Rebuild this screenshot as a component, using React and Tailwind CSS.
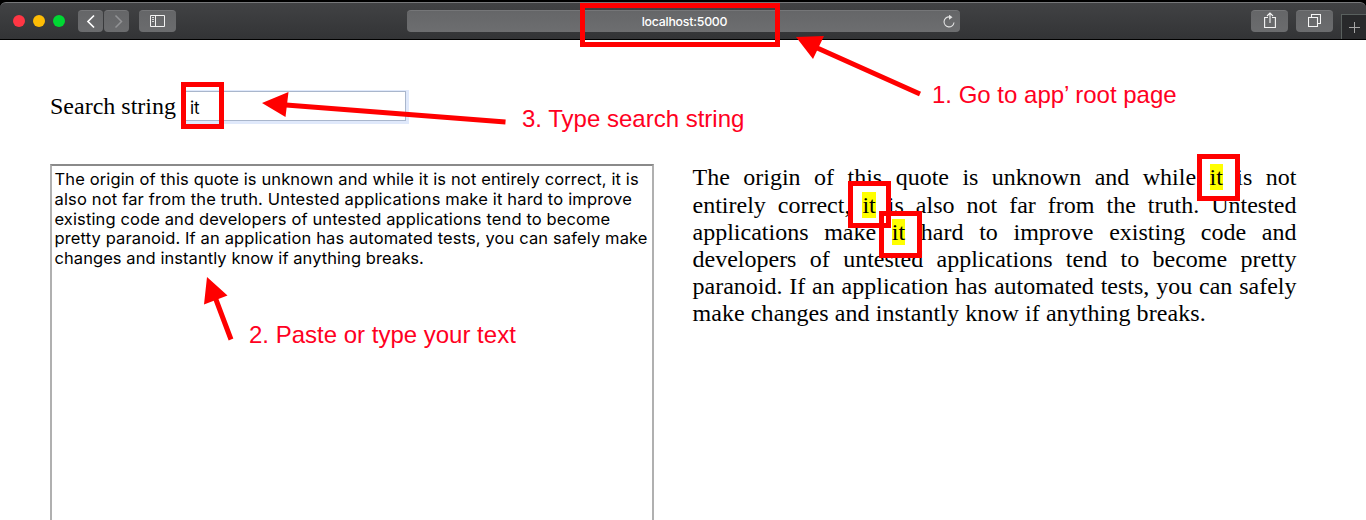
import React from "react";

const typedLines = [
  ["The origin of this quote is unknown and while it is not entirely correct, it is", "h-[20px] tracking-[0.130px]"],
  ["also not far from the truth. Untested applications make it hard to improve", "h-[20px] tracking-[0.165px]"],
  ["existing code and developers of untested applications tend to become", "h-[19px] tracking-[0.120px]"],
  ["pretty paranoid. If an application has automated tests, you can safely make", "h-[20px] tracking-[0.125px]"],
  ["changes and instantly know if anything breaks.", "h-[20px] tracking-[0.070px]"],
];

const Hit = () => <mark className="bg-[#ffff00] text-black">it</mark>;

const resultLines = [
  ["h-[28px]", <>The origin of this quote is unknown and while <Hit /> is not</>],
  ["h-[27px]", <>entirely correct, <Hit /> is also not far from the truth. Untested</>],
  ["h-[27px]", <>applications make <Hit /> hard to improve existing code and</>],
  ["h-[27px]", <>developers of untested applications tend to become pretty</>],
  ["h-[27px]", <>paranoid. If an application has automated tests, you can safely</>],
];

function ToolButton({ className, children }) {
  return (
    <button className={`flex h-[22px] items-center justify-center rounded border-t border-[#757678] bg-linear-to-b from-[#656668] to-[#6b6c6e] ${className}`}>
      {children}
    </button>
  );
}

function Toolbar() {
  return (
    <header className="flex h-10 flex-col bg-black pt-0.5 pb-px">
      <div className="flex grow rounded-t-md border-t border-[#77787a] bg-linear-to-b from-[#414244] to-[#333436] pt-[7px] pl-[13px]">
        <div className="mt-[5px] flex w-[65px] gap-2">
          <i className="size-3 rounded-full bg-[#ff3644]" />
          <i className="size-3 rounded-full bg-[#fdbc05]" />
          <i className="size-3 rounded-full bg-[#00d733]" />
        </div>
        <div className="flex gap-px">
          <ToolButton className="w-[25px]">
            <svg className="size-[22px]" viewBox="0 0 22 22" fill="none" stroke="#fff" strokeWidth="1.7"><path d="M14 4.500 8 10.500l6 6" /></svg>
          </ToolButton>
          <ToolButton className="w-[25px]">
            <svg className="size-[22px]" viewBox="0 0 22 22" fill="none" stroke="#929395" strokeWidth="1.5"><path d="m9.500 4.500 6 6-6 6" /></svg>
          </ToolButton>
        </div>
        <ToolButton className="ml-[10px] w-[37px]">
          <svg className="-mt-px h-3 w-[15px]" viewBox="0 0 15 12" fill="none" stroke="#f2f2f2"><path d="M.5.5h14v11H.5zM5.500.5v11" /><path d="M2 2.500h2M2 4.500h2M2 6.500h2" strokeWidth=".8" /></svg>
        </ToolButton>
        <div className="ml-[231px] flex h-[22px] w-[553px] items-center rounded border-t border-[#757678] bg-linear-to-b from-[#656668] to-[#6d6e70]">
          <div className="grow pt-[2px] pl-[2px] text-center font-['Inter','Liberation_Sans',sans-serif] text-[12.300px] font-medium text-white"><span className="inline-block pl-[18px] tracking-[-0.210px]">localhost:5000</span></div>
          <svg className="mr-[4px] size-[14px]" viewBox="0 0 14 14" fill="none" stroke="#e3e3e3" strokeWidth="1.100"><path d="M7.500 1.900A5 5 0 1 0 12 7.500" /><path d="m7-.3 3.500 2.500L7 4.700z" fill="#e3e3e3" stroke="none" /></svg>
        </div>
        <ToolButton className="ml-[291px] w-[37px]">
          <svg className="-mt-[3px] h-4 w-3" viewBox="0 0 12 16" fill="none" stroke="#f5f5f5" strokeWidth="1.100"><path d="M4 5.500H.6v10h10.800v-10H8M6 11V1M3 4l3-3 3 3" /></svg>
        </ToolButton>
        <ToolButton className="ml-2 w-[37px]">
          <svg className="-mt-[2px] h-[13px] w-[13px]" viewBox="0 0 13 13" fill="none" stroke="#f5f5f5" strokeWidth="1.100"><path d="M.5 3.500h9v9h-9zM3.500 3.500v-3h9v9h-3" /></svg>
        </ToolButton>
        <div className="mt-1 ml-2 flex w-[25px] items-center justify-center border-t border-l border-[#59605e] bg-[#28292b]">
          <svg className="size-[11px]" viewBox="0 0 11 11" stroke="#a5a5a5"><path d="M5.500 0v11M0 5.500h11" /></svg>
        </div>
      </div>
    </header>
  );
}

function Annotations() {
  return (
    <div className="pointer-events-none absolute inset-0 font-['Liberation_Sans',Arial,sans-serif] text-2xl leading-7 whitespace-nowrap text-[#ff0022]">
      <svg className="absolute inset-0 h-[520px] w-[1366px]" fill="#f00" stroke="#f00" strokeWidth="5">
        <path d="M920 94 815 47M505.500 122 286 105M231 339.500 215 297" />
        <path stroke="none" d="m796 37 28-1-11 23zM262 103l26.500-11-3 25zM207 277l20.500 18.500-23.500 9z" />
      </svg>
      <div className="absolute top-[3px] left-[580px] h-11 w-[200px] border-5 border-[#f00]" />
      <div className="absolute top-[82px] left-[181px] h-[47px] w-[43px] border-5 border-[#f00]" />
      <div className="absolute top-[154px] left-[1197px] h-[47px] w-[43px] border-5 border-[#f00]" />
      <div className="absolute top-[181px] left-[848px] h-[47px] w-[43px] border-5 border-[#f00]" />
      <div className="absolute top-[211px] left-[879px] h-[47px] w-[43px] border-5 border-[#f00]" />
      <p className="absolute top-[81px] left-[932px]">1. Go to app’ root page</p>
      <p className="absolute top-[321px] left-[249px]">2. Paste or type your text</p>
      <p className="absolute top-[105px] left-[522px]">3. Type search string</p>
    </div>
  );
}

export default function App() {
  return (
    <div className="relative h-[520px] w-[1366px] overflow-hidden bg-white text-black">
      <Toolbar />
      <main className="px-[50px] pt-[51px] font-['Liberation_Serif',serif] text-2xl leading-[27.200px]">
        <div className="flex h-[31px] items-center">
          <label className="w-[135px]">Search string</label>
          <div className="flex h-[30px] w-[221px] items-center self-start border border-[#a9b6cc] pt-[5px] pl-1 font-['Inter',sans-serif] text-[17px] shadow-[1px_1px_0_2px_#e0e9fb]">it</div>
        </div>
        <div className="mt-[42px] flex gap-[38.500px]">
          <section className="flex h-[380px] w-[604px] flex-col border-2 border-[#b0b0b0] border-t-[#8a8a8a] pt-[3.500px] pl-[2.500px] font-['Inter',sans-serif] text-[16.500px] leading-[19.700px] whitespace-nowrap">
            {typedLines.map(([line, style]) => (
              <p key={line} className={style}>{line}</p>
            ))}
          </section>
          <section className="w-[604px]">
            {resultLines.map(([height, line], i) => (
              <p key={i} className={`text-justify whitespace-nowrap [text-align-last:justify] ${height}`}>{line}</p>
            ))}
            <p className="tracking-[0.080px]">make changes and instantly know if anything breaks.</p>
          </section>
        </div>
      </main>
      <Annotations />
    </div>
  );
}
